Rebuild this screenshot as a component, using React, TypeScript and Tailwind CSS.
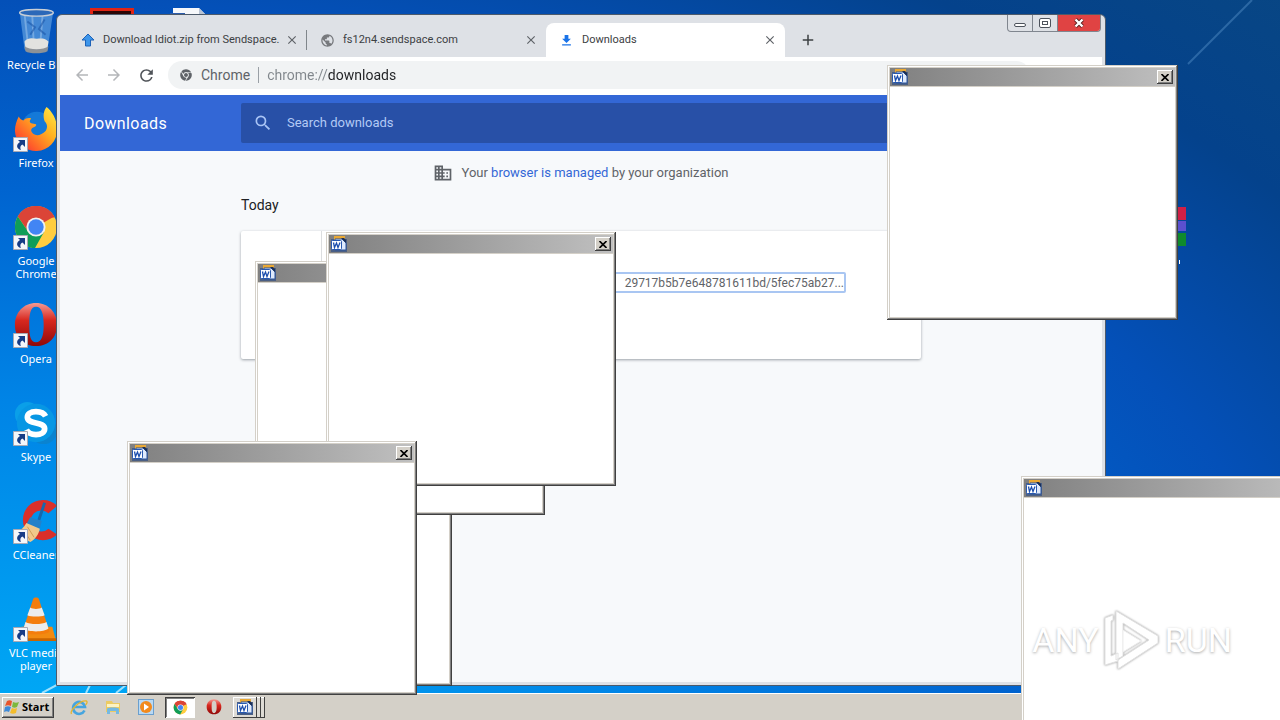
import type { ReactNode } from 'react';
import { FaChrome } from 'react-icons/fa';
import {
  MdAdd,
  MdArrowBack,
  MdArrowForward,
  MdClose,
  MdDomain,
  MdFileDownload,
  MdPublic,
  MdRefresh,
  MdSearch,
} from 'react-icons/md';

function RecycleBinIcon() {
  return (
    <svg viewBox="0 0 48 48" className="h-12 w-12">
      <path d="M7 4l5 39c3 4 20 4 24 0l6-39z" fill="#5f9fe0" fillOpacity=".7" />
      <path d="M12 6l4 36M20 6l2 37M31 6l-3 37" stroke="#cfe4f8" strokeOpacity=".35" strokeWidth="2" />
      <path d="M15 14l8 6-5 8M33 12l-6 10 7 6" stroke="#1d57a8" strokeWidth="2" fill="none" opacity=".6" />
      <path d="M12 35c4-5 9-3 13-3s8-1 12 3l-1 7c-5 4-19 4-23 0z" fill="#e2e2df" />
      <path d="M12 40c5 4 20 4 25 0l-1 5c-5 3-19 3-23 0z" fill="#8d9297" />
      <ellipse cx="24.500" cy="5" rx="17.500" ry="3.500" fill="#2b68b8" stroke="#c9cfd6" strokeWidth="1.500" />
    </svg>
  );
}

function FirefoxIcon() {
  return (
    <svg viewBox="0 0 48 48" className="h-12 w-12">
      <defs>
        <linearGradient id="fox" x1="1" y1="0" x2="0" y2="1">
          <stop offset="0" stopColor="#fff04a" />
          <stop offset=".4" stopColor="#ffb01f" />
          <stop offset=".75" stopColor="#ff5a2a" />
          <stop offset="1" stopColor="#e0205a" />
        </linearGradient>
      </defs>
      <circle cx="25" cy="22" r="16" fill="#1479d8" />
      <path
        d="M6 11c1 2 3 4 5 4 2-2 5-3 8-2-2 2-2 4 0 5l5 1c1 2-2 3-4 4-2 2-1 4 1 6 4 3 9 1 13-3 3-4 1-8-1-10-2-6-1-11 2-15 5 4 11 12 11 23a22 22 0 0 1-44 2c0-6 2-11 4-15z"
        fill="url(#fox)"
      />
    </svg>
  );
}

function ChromeIcon({ className = 'h-12 w-12' }: { className?: string }) {
  return (
    <svg viewBox="0 0 48 48" className={className}>
      <circle cx="24" cy="24" r="22" fill="#ffcd40" />
      <path d="M24 24L5 13a22 22 0 0 1 38 0z" fill="#db4437" />
      <path d="M24 14h19.500a22 22 0 0 0-38.500-1l11 16z" fill="#db4437" />
      <path d="M5 13a22 22 0 0 0 18 33l9.500-17-17-0.500z" fill="#0f9d58" />
      <circle cx="24" cy="24" r="10" fill="#f1f1f1" />
      <circle cx="24" cy="24" r="8" fill="#4285f4" />
    </svg>
  );
}

function OperaIcon({ className = 'h-12 w-12' }: { className?: string }) {
  return (
    <svg viewBox="0 0 48 48" className={className}>
      <defs>
        <linearGradient id="opera" x1="0" y1="0" x2="0" y2="1">
          <stop offset="0" stopColor="#f59a92" />
          <stop offset=".4" stopColor="#d8281f" />
          <stop offset="1" stopColor="#8f0808" />
        </linearGradient>
      </defs>
      <path
        fillRule="evenodd"
        d="M24 1c13 0 22 10 22 23s-9 22-22 22S2 37 2 24 11 1 24 1zm0 4c-6 0-7 8-7 19s1 18 7 18 8-7 8-18-2-19-8-19z"
        fill="url(#opera)"
      />
    </svg>
  );
}

function SkypeIcon() {
  return (
    <svg viewBox="0 0 48 48" className="h-12 w-12">
      <circle cx="15" cy="15" r="13" fill="#0a9fe8" />
      <circle cx="32" cy="32" r="14" fill="#0a83d0" />
      <circle cx="24" cy="24" r="20" fill="#0797e4" />
      <path
        d="M34 17c-2-4-6-5-10-5-6 0-9 3-9 6 0 8 18 4 18 12 0 4-4 6-9 6-4 0-8-1-10-5"
        fill="none"
        stroke="#fff"
        strokeWidth="6"
      />
    </svg>
  );
}

function CCleanerIcon() {
  return (
    <svg viewBox="0 0 48 48" className="h-12 w-12">
      <path d="M46 8A21 21 0 1 0 46 38l-9-6a11 11 0 1 1 0-16z" fill="#d92f2a" />
      <path d="M33 5l-6 18" stroke="#1767ac" strokeWidth="3" />
      <path d="M18 20l12 4-2 8-14-5z" fill="#2381c9" />
      <path d="M14 26l14 6c-1 6-5 11-10 14L2 37c5-2 9-6 12-11z" fill="#f1c88b" />
      <path d="M10 32l8 12M15 30l7 11" stroke="#cf9b57" />
    </svg>
  );
}

function VlcIcon() {
  return (
    <svg viewBox="0 0 48 48" className="h-12 w-12">
      <path d="M9 32h32l4 15H5z" fill="#f28a10" />
      <path d="M5 44h40v3H5z" fill="#c96500" />
      <path d="M21 3c1-2 5-2 6 0l11 34c-3 4-25 4-28 0z" fill="#f47d0c" />
      <path d="M18 12c3 2 9 2 12 0l3 8c-4 2-14 2-18 0zM13 27c5 3 17 3 22 0l2 7c-5 4-21 4-26 0z" fill="#ececec" />
    </svg>
  );
}

function ShortcutArrow() {
  return (
    <svg viewBox="0 0 15 15" className="absolute bottom-1 left-0 h-[15px] w-[15px]">
      <path d="M.5.5h14v14H.5z" fill="#f4f6fa" stroke="#a9a9b4" />
      <path d="M5 3h7v7L9.500 7.500C7 8.500 7 11 8 13 3 12 3 7 7 5z" fill="#173c86" />
    </svg>
  );
}

function DesktopIcon({ label, icon, shortcut = true }: { label: string; icon: ReactNode; shortcut?: boolean }) {
  return (
    <button className="flex h-[98px] w-[72px] flex-col items-center pt-[7px] text-[11px] leading-[13px] text-white">
      <span className="relative flex h-[51px] w-[46px] shrink-0 justify-center">
        {icon}
        {shortcut && <ShortcutArrow />}
      </span>
      <span className="w-[60px] text-center">{label}</span>
    </button>
  );
}

function WordIcon({ className = 'h-4 w-4' }: { className?: string }) {
  return (
    <svg viewBox="0 0 16 16" className={className}>
      <path d="M0 3h16v13H0z" fill="#4a5f85" />
      <path d="M3 0h11v4H3z" fill="#e9a834" />
      <path d="M4 3h7l4 4v7H4z" fill="#dfeafc" stroke="#2a549c" />
      <path d="M10 2l5 5V4l-2-2z" fill="#1c2f55" />
      <rect x=".5" y="4.500" width="10" height="9" rx="1" fill="#fff" stroke="#2859b0" />
      <path d="M2.500 6.500l1 5 2-4.500 1.500 4.500 2-5" fill="none" stroke="#1d4fae" strokeWidth="1.300" />
    </svg>
  );
}

function PopupWindow({ className, closable = true }: { className: string; closable?: boolean }) {
  return (
    <section
      className={`absolute flex flex-col bg-[#d4d0c8] p-[3px] shadow-[inset_-1px_-1px_#404040,inset_1px_1px_#d4d0c8,inset_-2px_-2px_#808080,inset_2px_2px_#fff] ${className}`}
    >
      <div className="flex h-[18px] shrink-0 items-center justify-between bg-linear-to-r from-[#808080] to-[#c0c0c0] px-[2px]">
        <WordIcon />
        {closable && (
          <button
            aria-label="Close"
            className="flex h-[14px] w-4 items-center justify-center bg-[#d4d0c8] shadow-[inset_-1px_-1px_#404040,inset_1px_1px_#fff,inset_-2px_-2px_#808080]"
          >
            <svg viewBox="0 0 8 7" className="h-[7px] w-2">
              <path d="M.5 0l7 7M7.500 0l-7 7" stroke="#000" strokeWidth="1.600" />
            </svg>
          </button>
        )}
      </div>
      <div className="mt-px flex-1 bg-white" />
    </section>
  );
}

function Tab({ title, icon, active }: { title: string; icon: ReactNode; active?: boolean }) {
  return (
    <div
      className={`flex h-full w-[239px] shrink-0 items-center pr-2 pl-[13px] ${
        active ? 'rounded-t-lg bg-white' : ''
      }`}
    >
      <button
        role="tab"
        aria-selected={!!active}
        className="flex flex-1 items-center gap-2 font-[Roboto,sans-serif] text-[11px] whitespace-nowrap text-[#3c4043]"
      >
        <span className="shrink-0">{icon}</span>
        <span>{title}</span>
      </button>
      <button aria-label={`Close ${title}`}>
        <MdClose className="h-[14px] w-[14px] text-[#5f6368]" />
      </button>
    </div>
  );
}

function WindowControls() {
  return (
    <div className="mr-px flex h-[17px] overflow-hidden rounded-b-sm border border-t-0 border-[#80868f]">
      <button aria-label="Minimize" className="flex w-[25px] items-end justify-center border-r border-[#80868f] pb-1">
        <span className="h-1 w-3 rounded-xs border border-[#4d535c] bg-white" />
      </button>
      <button aria-label="Maximize" className="flex w-[25px] items-center justify-center border-r border-[#80868f]">
        <span className="flex h-[10px] w-3 items-center justify-center rounded-xs border border-[#4d535c] bg-white">
          <span className="h-1 w-[6px] border border-[#4d535c]" />
        </span>
      </button>
      <button aria-label="Close" className="flex w-[42px] items-center justify-center bg-[#e04343]">
        <svg viewBox="0 0 12 10" className="h-[10px] w-3">
          <path d="M2.500 1.500l7 7M9.500 1.500l-7 7" stroke="#5a2020" strokeWidth="4" />
          <path d="M2.500 1.500l7 7M9.500 1.500l-7 7" stroke="#fff" strokeWidth="2.400" />
        </svg>
      </button>
    </div>
  );
}

function BrowserWindow() {
  return (
    <main className="absolute top-[14px] right-[174px] bottom-[34px] left-[56px] flex flex-col rounded-t-md border border-[#4c5a6b] bg-[#dee1e6] px-[3px] pb-[3px]">
      <div className="flex h-[42px] shrink-0 justify-between">
        <div role="tablist" className="flex items-center pt-2 pl-2">
          <Tab
            title="Download Idiot.zip from Sendspace."
            icon={
              <svg viewBox="0 0 14 14" className="h-[14px] w-[14px]">
                <path d="M7 1l6 6H9.500v6h-5V7H1z" fill="#3d95ea" stroke="#1c62b8" />
              </svg>
            }
          />
          <span className="-ml-px h-5 w-px bg-[#80868b]" />
          <Tab title="fs12n4.sendspace.com" icon={<MdPublic className="h-[15px] w-[15px] text-[#77797d]" />} />
          <Tab title="Downloads" active icon={<MdFileDownload className="h-[15px] w-[15px] text-[#1a73e8]" />} />
          <button aria-label="New tab" className="ml-[14px]">
            <MdAdd className="h-[18px] w-[18px] text-[#3c4043]" />
          </button>
        </div>
        <WindowControls />
      </div>

      <div className="flex h-[38px] shrink-0 items-center bg-white pr-[72px] pb-[2px] pl-[13px]">
        <div className="flex w-[95px] gap-[14px]">
          <button aria-label="Back">
            <MdArrowBack className="h-[18px] w-[18px] text-[#b4b6b9]" />
          </button>
          <button aria-label="Forward">
            <MdArrowForward className="h-[18px] w-[18px] text-[#b4b6b9]" />
          </button>
          <button aria-label="Reload">
            <MdRefresh className="h-[19px] w-[19px] text-[#505459]" />
          </button>
        </div>
        <div className="flex h-7 flex-1 items-center rounded-full bg-[#f1f3f4] pl-3 font-[Roboto,sans-serif] text-[14px]">
          <FaChrome className="h-3 w-3 text-[#5f6368]" />
          <label htmlFor="address" className="ml-[9px] text-[#5f6368]">
            Chrome
          </label>
          <span className="mx-2 h-4 w-px bg-[#9aa0a6]" />
          <input
            id="address"
            defaultValue="chrome://downloads"
            className="flex-1 bg-[linear-gradient(to_right,#80868b_61px,#202124_61px)] bg-clip-text text-transparent outline-none"
          />
        </div>
      </div>

      <div className="flex flex-1 flex-col bg-[#f7f9fb] font-[Roboto,sans-serif]">
        <header className="flex h-14 items-center bg-[#3367d6]">
          <div className="flex-1">
            <h1 className="pt-px pl-6 text-[16px] tracking-wide text-white">Downloads</h1>
          </div>
          <label className="flex h-10 w-[680px] items-center gap-[14px] rounded-xs bg-[#2850a7] px-3">
            <MdSearch className="h-5 w-5 text-[#a9c4f5]" />
            <input
              type="text"
              aria-label="Search downloads"
              placeholder="Search downloads"
              className="flex-1 text-[13px] outline-none placeholder:text-[#b3caf5]"
            />
          </label>
          <div className="flex-1" />
        </header>

        <div className="mx-auto w-[680px]">
          <p className="flex h-[43px] items-center justify-center gap-2 text-[13px] text-[#5f6368]">
            <MdDomain className="h-5 w-5" />
            <span>
              Your{' '}
              <a href="#managed" className="text-[#3367d6]">
                browser is managed
              </a>{' '}
              by your organization
            </span>
          </p>
          <h2 className="h-[37px] pt-px text-[14px] text-[#202124]">Today</h2>
          <div className="flex h-32 rounded-xs bg-white shadow-[0_1px_3px_#9aa0a6]">
            <div className="w-[81px] border-r border-[#dcdee0]" />
            <div className="flex-1 pt-[41px] pr-[75px] pl-6">
              <a
                href="#download"
                className="flex h-[21px] items-center justify-end rounded-xs border-2 border-[#a9c6f2] text-[12px] whitespace-nowrap text-[#5f6368]"
              >
                29717b5b7e648781611bd/5fec75ab27...
              </a>
            </div>
          </div>
        </div>
      </div>
    </main>
  );
}

function Taskbar() {
  return (
    <footer className="relative flex h-[27px] items-center border-t border-white bg-[#d4d0c8] pl-[2px]">
      <button className="flex h-[21px] w-[52px] items-center gap-[2px] pl-[2px] font-['Open_Sans',sans-serif] text-[11px] font-bold text-black shadow-[inset_-1px_-1px_#404040,inset_1px_1px_#fff,inset_-2px_-2px_#808080]">
        <svg viewBox="0 0 16 16" className="h-4 w-4 shrink-0">
          <path d="M3 2c2-1 3-1 5 0L7 7c-2-1-4-1-6 0z" fill="#e8542a" />
          <path d="M9 3c2 1 4 1 6 0l-2 5c-2 1-3 1-5 0z" fill="#7cb83c" />
          <path d="M1 8c2-1 4-1 6 0l-2 5c-2-1-3-1-5 0z" fill="#3e8ad8" />
          <path d="M8 9c2 1 3 1 5 0l-1 5c-2 1-4 1-6 0z" fill="#f4bd2c" />
        </svg>
        Start
      </button>
      <div className="ml-2 flex items-center">
        <button aria-label="Internet Explorer" className="flex w-[34px] justify-center">
          <svg viewBox="0 0 18 18" className="h-[18px] w-[18px]">
            <path d="M14.500 12.500a6 6 0 1 1 .5-3.500H4" fill="none" stroke="#46a5df" strokeWidth="2.600" />
            <path d="M1.500 16c-2-3 8-14 15-13 1 1 0 3-1 4" fill="none" stroke="#e5b52e" strokeWidth="1.300" />
          </svg>
        </button>
        <button aria-label="Windows Explorer" className="flex w-[33px] justify-center">
          <svg viewBox="0 0 18 18" className="h-[18px] w-[18px]">
            <path d="M2 3h6l1 2h7v9H2z" fill="#eccb62" />
            <path d="M3 6h12v3H3z" fill="#fdf3c2" />
            <path d="M3 16v-5c0-2 12-2 12 0v5h-3v-3H6v3z" fill="#75b9e2" />
          </svg>
        </button>
        <button aria-label="Media Player" className="flex w-[34px] justify-center">
          <svg viewBox="0 0 18 18" className="h-[18px] w-[18px]">
            <rect x="1.500" y="1.500" width="15" height="15" fill="#b9d9f3" stroke="#6a9fce" />
            <circle cx="9" cy="9" r="6" fill="#f28a1c" />
            <path d="M7 5.500l5 3.500-5 3.500z" fill="#fff" />
          </svg>
        </button>
        <button
          aria-label="Google Chrome"
          className="mx-[2px] flex h-[21px] w-[30px] items-center justify-center bg-white shadow-[inset_1px_1px_#404040,inset_-1px_-1px_#fff,inset_2px_2px_#808080]"
        >
          <ChromeIcon className="h-[15px] w-[15px]" />
        </button>
        <button aria-label="Opera" className="flex w-[34px] justify-center">
          <OperaIcon className="h-4 w-4" />
        </button>
        <button
          aria-label="Microsoft Word"
          className="ml-[2px] flex h-[21px] w-8 items-center gap-[3px] bg-[#dedbd5] pl-1 shadow-[inset_-1px_-1px_#404040,inset_1px_1px_#fff]"
        >
          <WordIcon />
          <span className="h-full w-px bg-[#404040]" />
          <span className="h-full w-px bg-[#404040]" />
        </button>
      </div>
    </footer>
  );
}

function Watermark() {
  return (
    <div className="absolute right-12 bottom-12 flex items-center gap-[3px] font-[Roboto,sans-serif] text-[34px] leading-[64px] text-white [text-shadow:0_1px_3px_#aaa]">
      <span>ANY</span>
      <svg viewBox="0 0 60 64" className="h-16 w-[60px] drop-shadow-[0_0_1px_#999]">
        <path d="M14 3l42 25v7L16 61v-9l31-20-26-17v33l-7 4zM3 10l8-3v5l-2 1v35l7-3v8L3 57z" fill="#fff" stroke="#e2e2e2" />
        <path d="M21 22l18 11-18 11z" fill="#fff" stroke="#eee" />
      </svg>
      <span>RUN</span>
    </div>
  );
}

export default function App() {
  return (
    <div className="relative flex min-h-screen flex-col overflow-hidden bg-[radial-gradient(100%_105%_at_3%_105%,#00aef8_0%,#0084e6_47%,#0064d0_75%,#0450b8_100%,#04428c_122%,#084684_140%)] font-['Noto_Sans',sans-serif]">
      <div className="flex flex-1 items-start gap-1">
        <nav className="flex flex-col">
          <DesktopIcon label="Recycle Bin" icon={<RecycleBinIcon />} shortcut={false} />
          <DesktopIcon label="Firefox" icon={<FirefoxIcon />} />
          <DesktopIcon label="Google Chrome" icon={<ChromeIcon />} />
          <DesktopIcon label="Opera" icon={<OperaIcon />} />
          <DesktopIcon label="Skype" icon={<SkypeIcon />} />
          <DesktopIcon label="CCleaner" icon={<CCleanerIcon />} />
          <DesktopIcon label="VLC media player" icon={<VlcIcon />} />
        </nav>
        <div className="flex gap-9 pt-2 pl-[14px]">
          <svg viewBox="0 0 44 44" className="h-11 w-11">
            <path d="M1.500 1.500h41v41h-41z" fill="#2a0606" stroke="#e02414" strokeWidth="3" />
          </svg>
          <svg viewBox="0 0 36 44" className="h-11 w-9">
            <path d="M3 0h26l7 7v37H3z" fill="#f6f8fb" />
            <path d="M29 0v7h7" fill="#b9c4d4" />
            <path d="M0 5h15v14H0z" fill="#2c5cab" />
          </svg>
        </div>
      </div>

      {/* light streaks of the wallpaper */}
      <svg viewBox="0 0 80 70" className="absolute top-0 right-5 h-[70px] w-20">
        <path d="M72 0L8 64" stroke="#6fa8dc" strokeOpacity=".35" strokeWidth="2" />
      </svg>
      <svg viewBox="0 0 90 12" className="absolute bottom-[27px] left-10 h-3 w-[90px]">
        <path d="M2 12L24 0M46 12l6-12M76 12l10-8" stroke="#c4f0ff" strokeOpacity=".8" strokeWidth="2" />
      </svg>

      <svg viewBox="0 0 32 58" className="absolute top-[207px] left-[1154px] h-[58px] w-8">
        <path d="M0 0h32v13H0z" fill="#d01f46" />
        <path d="M0 14h32v10H0z" fill="#5b50cf" />
        <path d="M0 26h32v13H0z" fill="#0f8a2c" />
        <path d="M25 53h1v4h-1z" fill="#fff" />
      </svg>

      <Taskbar />
      <BrowserWindow />

      <PopupWindow className="top-[445px] left-[162px] h-[241px] w-[290px]" />
      <PopupWindow className="top-[261px] left-[255px] h-[254px] w-[290px]" />
      <PopupWindow className="top-[232px] left-[326px] h-[254px] w-[290px]" />
      <PopupWindow className="top-[441px] left-[127px] h-[254px] w-[290px]" />
      <PopupWindow className="top-[65px] left-[887px] h-[255px] w-[291px]" />
      <PopupWindow className="top-[476px] left-[1021px] h-[254px] w-[290px]" closable={false} />
      <Watermark />
    </div>
  );
}
